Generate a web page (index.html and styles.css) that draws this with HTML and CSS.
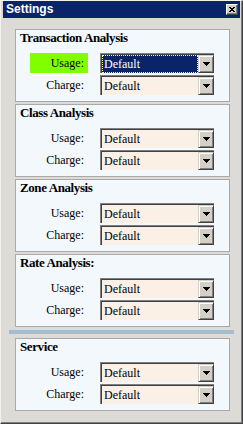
FILE: index.html
```html
<!DOCTYPE html>
<html lang="en">
<head>
  <meta charset="UTF-8">
  <meta name="viewport" content="width=device-width, initial-scale=1.0">
  <title>Settings</title>
  <link rel="stylesheet" href="styles.css">
</head>
<body>
  <div class="window">
    <div class="titlebar">
      <span class="title">Settings</span>
      <span class="close-btn">
        <svg width="6" height="5" viewBox="0 0 6 5"><path d="M0 0h2v1H0zM4 0h2v1H4zM1 1h4v1H1zM2 2h2v1H2zM1 3h4v1H1zM0 4h2v1H0zM4 4h2v1H4z" fill="#000"/></svg>
      </span>
    </div>
    <div class="content">
      <section class="panel">
        <h2 class="panel-title">Transaction Analysis</h2>
        <div class="field">
          <span class="label label-hl">Usage:</span>
          <div class="combo">
            <span class="combo-value combo-value-sel">Default</span>
            <span class="combo-btn"><svg width="7" height="4" viewBox="0 0 7 4"><path d="M0 0h7v1H0zM1 1h5v1H1zM2 2h3v1H2zM3 3h1v1H3z" fill="#000"/></svg></span>
          </div>
        </div>
        <div class="field">
          <span class="label">Charge:</span>
          <div class="combo">
            <span class="combo-value">Default</span>
            <span class="combo-btn"><svg width="7" height="4" viewBox="0 0 7 4"><path d="M0 0h7v1H0zM1 1h5v1H1zM2 2h3v1H2zM3 3h1v1H3z" fill="#000"/></svg></span>
          </div>
        </div>
      </section>

      <section class="panel">
        <h2 class="panel-title">Class Analysis</h2>
        <div class="field">
          <span class="label">Usage:</span>
          <div class="combo">
            <span class="combo-value">Default</span>
            <span class="combo-btn"><svg width="7" height="4" viewBox="0 0 7 4"><path d="M0 0h7v1H0zM1 1h5v1H1zM2 2h3v1H2zM3 3h1v1H3z" fill="#000"/></svg></span>
          </div>
        </div>
        <div class="field">
          <span class="label">Charge:</span>
          <div class="combo">
            <span class="combo-value">Default</span>
            <span class="combo-btn"><svg width="7" height="4" viewBox="0 0 7 4"><path d="M0 0h7v1H0zM1 1h5v1H1zM2 2h3v1H2zM3 3h1v1H3z" fill="#000"/></svg></span>
          </div>
        </div>
      </section>

      <section class="panel">
        <h2 class="panel-title">Zone Analysis</h2>
        <div class="field">
          <span class="label">Usage:</span>
          <div class="combo">
            <span class="combo-value">Default</span>
            <span class="combo-btn"><svg width="7" height="4" viewBox="0 0 7 4"><path d="M0 0h7v1H0zM1 1h5v1H1zM2 2h3v1H2zM3 3h1v1H3z" fill="#000"/></svg></span>
          </div>
        </div>
        <div class="field">
          <span class="label">Charge:</span>
          <div class="combo">
            <span class="combo-value">Default</span>
            <span class="combo-btn"><svg width="7" height="4" viewBox="0 0 7 4"><path d="M0 0h7v1H0zM1 1h5v1H1zM2 2h3v1H2zM3 3h1v1H3z" fill="#000"/></svg></span>
          </div>
        </div>
      </section>

      <section class="panel">
        <h2 class="panel-title">Rate Analysis:</h2>
        <div class="field">
          <span class="label">Usage:</span>
          <div class="combo">
            <span class="combo-value">Default</span>
            <span class="combo-btn"><svg width="7" height="4" viewBox="0 0 7 4"><path d="M0 0h7v1H0zM1 1h5v1H1zM2 2h3v1H2zM3 3h1v1H3z" fill="#000"/></svg></span>
          </div>
        </div>
        <div class="field">
          <span class="label">Charge:</span>
          <div class="combo">
            <span class="combo-value">Default</span>
            <span class="combo-btn"><svg width="7" height="4" viewBox="0 0 7 4"><path d="M0 0h7v1H0zM1 1h5v1H1zM2 2h3v1H2zM3 3h1v1H3z" fill="#000"/></svg></span>
          </div>
        </div>
      </section>

      <div class="divider"></div>

      <section class="panel">
        <h2 class="panel-title">Service</h2>
        <div class="field">
          <span class="label">Usage:</span>
          <div class="combo">
            <span class="combo-value">Default</span>
            <span class="combo-btn"><svg width="7" height="4" viewBox="0 0 7 4"><path d="M0 0h7v1H0zM1 1h5v1H1zM2 2h3v1H2zM3 3h1v1H3z" fill="#000"/></svg></span>
          </div>
        </div>
        <div class="field">
          <span class="label">Charge:</span>
          <div class="combo">
            <span class="combo-value">Default</span>
            <span class="combo-btn"><svg width="7" height="4" viewBox="0 0 7 4"><path d="M0 0h7v1H0zM1 1h5v1H1zM2 2h3v1H2zM3 3h1v1H3z" fill="#000"/></svg></span>
          </div>
        </div>
      </section>
    </div>
  </div>
</body>
</html>
```

FILE: styles.css
```css
html, body {
  margin: 0;
  padding: 0;
  width: 243px;
  height: 424px;
  overflow: hidden;
  background: #dcdbd7;
  color: #000;
}
.window {
  box-sizing: border-box;
  width: 243px;
  height: 424px;
  border-style: solid;
  border-width: 1px;
  border-color: #f4f1ea #404040 #404040 #f4f1ea;
  box-shadow: inset -1px -1px 0 #808080;
  padding: 0 2px 2px 2px;
  background: #dcdbd7;
  display: flex;
  flex-direction: column;
  font-family: "Liberation Serif", "Times New Roman", serif;
}
.titlebar {
  height: 17px;
  flex: 0 0 17px;
  background: #0a246a;
  display: flex;
  align-items: center;
  justify-content: space-between;
  padding: 0 2px 0 3px;
}
.title {
  font-family: "Liberation Sans", Arial, sans-serif;
  font-weight: bold;
  font-size: 12px;
  line-height: 17px;
  color: #fff;
}
.close-btn {
  box-sizing: border-box;
  width: 12px;
  height: 11px;
  background: #d4d0c8;
  border: 1px solid;
  border-color: #fff #404040 #404040 #fff;
  box-shadow: inset -1px -1px 0 #808080;
  display: flex;
  align-items: center;
  justify-content: center;
}
.close-btn svg {
  display: block;
}
.content {
  margin: 11px 6px 0 6px;
  display: flex;
  flex-direction: column;
}
.panel {
  box-sizing: border-box;
  height: 73px;
  margin: 0 4px 2px 6px;
  border: 1px solid #a9a9a9;
  background: #f3f8fc;
}
.panel-title {
  box-sizing: border-box;
  height: 23px;
  margin: 0;
  padding: 1px 0 0 4px;
  font-size: 13px;
  letter-spacing: -0.4px;
  line-height: 14px;
  font-weight: bold;
}
.field {
  display: flex;
  align-items: center;
  gap: 12px;
  height: 20px;
  padding-left: 14px;
}
.field + .field {
  margin-top: 2px;
}
.label {
  box-sizing: border-box;
  width: 58px;
  height: 20px;
  line-height: 20px;
  padding-right: 4px;
  text-align: right;
  font-size: 12px;
}
.label-hl {
  background: #80ff00;
}
.combo {
  box-sizing: border-box;
  display: flex;
  width: 114px;
  height: 20px;
  border-top: 1px solid #808080;
  border-left: 1px solid #808080;
  box-shadow: inset 1px 1px 0 #404040;
  padding: 1px 0 0 1px;
  background: #faf0e6;
}
.combo-value {
  flex: 1;
  font-size: 12px;
  line-height: 19px;
  padding-left: 2px;
}
.combo-value-sel {
  background: #0a246a;
  color: #fff;
  outline: 1px dotted #fff8c0;
  outline-offset: -1px;
}
.combo-btn {
  box-sizing: border-box;
  width: 16px;
  background: #d4d0c8;
  border: 1px solid;
  border-color: #d4d0c8 #404040 #404040 #d4d0c8;
  box-shadow: inset 1px 1px 0 #fff, inset -1px -1px 0 #808080;
  display: flex;
  align-items: center;
  justify-content: center;
}
.combo-btn svg {
  display: block;
}
.divider {
  height: 4px;
  margin: 1px 0 4px 0;
  background: #a3bed1;
}
```
